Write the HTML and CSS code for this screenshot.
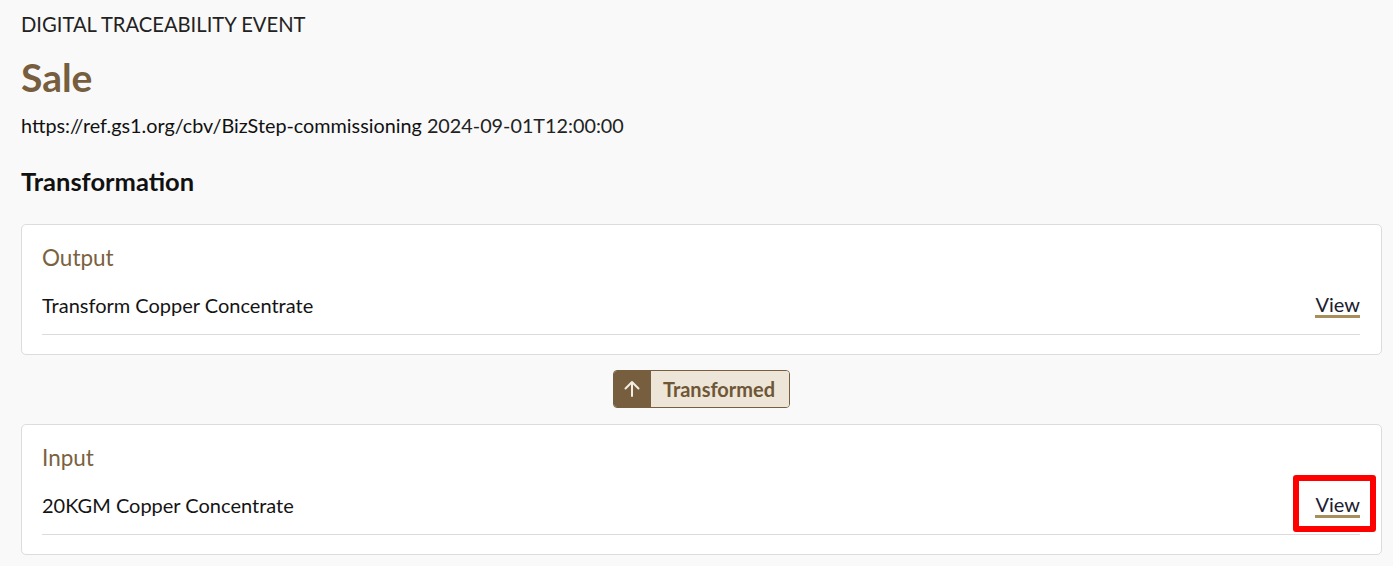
FILE: index.html
```html
<!DOCTYPE html>
<html lang="en">
<head>
<meta charset="utf-8">
<title>Digital Traceability Event</title>
<link rel="stylesheet" href="styles.css">
</head>
<body>
<main class="page">
  <div class="eyebrow">DIGITAL TRACEABILITY EVENT</div>
  <h1 class="title">Sale</h1>
  <p class="meta"><span>https://ref.gs1.org/cbv/BizStep-commissioning</span> <span class="date">2024-09-01T12:00:00</span></p>
  <h2 class="section">Transformation</h2>

  <section class="card">
    <h3 class="card-title">Output</h3>
    <div class="item">
      <span class="item-name">Transform Copper Concentrate</span>
      <a class="view" href="#">View</a>
    </div>
  </section>

  <div class="connector">
    <div class="badge">
      <span class="badge-icon">
        <svg width="20" height="20" viewBox="0 0 20 20" fill="none" stroke="#f3ede2" stroke-width="2" stroke-linecap="round" stroke-linejoin="round"><path d="M10 17V3M3.5 9.5L10 3L16.5 9.5"/></svg>
      </span>
      <span class="badge-text">Transformed</span>
    </div>
  </div>

  <section class="card">
    <h3 class="card-title">Input</h3>
    <div class="item">
      <span class="item-name">20KGM Copper Concentrate</span>
      <a class="view highlight" href="#">View</a>
    </div>
  </section>
</main>
</body>
</html>
```

FILE: styles.css
```css
html, body {
  margin: 0;
  padding: 0;
  background: #f9f9f9;
}
body {
  font-family: Lato, "Liberation Sans", sans-serif;
  color: #141414;
}
.page {
  padding: 12px 11px 12px 21px;
  display: flex;
  flex-direction: column;
}
.eyebrow {
  font-size: 20.2px;
  line-height: 24px;
  color: #222;
}
.title {
  margin: 18px 0 0;
  font-size: 39px;
  line-height: 46px;
  font-weight: 700;
  color: #765e3e;
}
.meta {
  margin: 12px 0 0;
  font-size: 19.8px;
  line-height: 26px;
  color: #111;
}
.meta .date {
  color: #222;
}
.section {
  margin: 27px 0 0;
  font-size: 25.5px;
  line-height: 32px;
  font-weight: 700;
  color: #111;
}
.card {
  background: #fff;
  border: 1px solid #dcdcdc;
  border-radius: 5px;
  padding: 19px 21px 19px 20px;
}
.section + .card {
  margin-top: 27px;
}
.card-title {
  margin: 0;
  font-size: 22.5px;
  line-height: 28px;
  font-weight: 400;
  color: #7a6241;
}
.item {
  margin-top: 21px;
  display: flex;
  justify-content: space-between;
  align-items: flex-start;
  padding-bottom: 16px;
  border-bottom: 1px solid #dcdcdc;
  font-size: 20px;
  line-height: 24px;
}
.view {
  position: relative;
  display: inline-block;
  color: #1b2030;
  text-decoration: none;
  line-height: 22px;
  border-bottom: 3px solid #a88e5a;
}
.highlight::after {
  content: "";
  position: absolute;
  left: -22px;
  right: -16px;
  top: -18px;
  bottom: -17px;
  border: 6px solid #ff0000;
  border-radius: 3px;
}
.connector {
  display: flex;
  justify-content: center;
  padding: 15px 0 16px;
}
.badge {
  display: flex;
  height: 38px;
  box-sizing: border-box;
  border: 1px solid #765e3e;
  border-radius: 4px;
  overflow: hidden;
}
.badge-icon {
  width: 37px;
  background: #765e3e;
  display: flex;
  align-items: center;
  justify-content: center;
}
.badge-text {
  background: #ede5d7;
  color: #6e5637;
  font-size: 20px;
  font-weight: 700;
  line-height: 36px;
  padding: 0 14px 0 12px;
}
```
